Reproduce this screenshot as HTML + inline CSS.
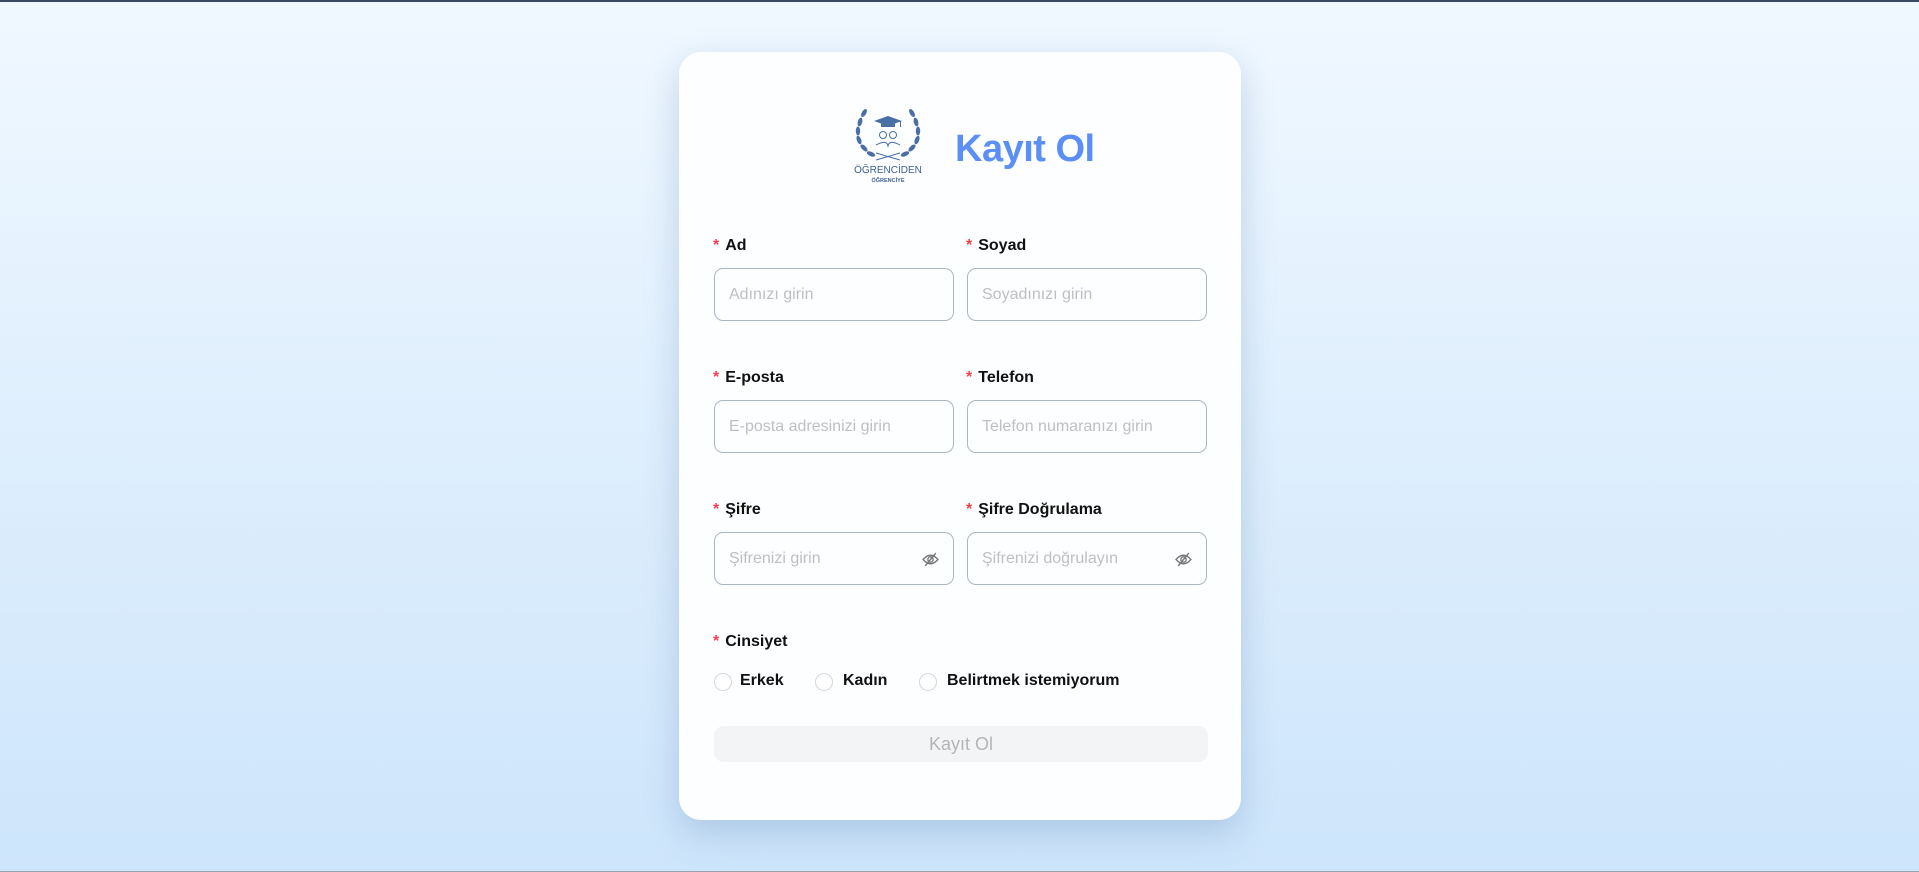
<!DOCTYPE html>
<html><head><meta charset="utf-8"><style>
*{box-sizing:border-box;margin:0;padding:0}
html,body{width:1919px;height:872px;overflow:hidden}
body{background:linear-gradient(180deg,#f0f8ff 0%,#cde5fb 100%);font-family:"Liberation Sans",sans-serif;position:relative;border-top:2px solid #3b4660}
.bot{position:absolute;left:0;right:0;bottom:0;height:1px;background:#9aa3ad}
.card{position:absolute;left:679px;top:50px;width:562px;height:768px;background:#fdfeff;border-radius:22px;box-shadow:0 12px 34px rgba(80,120,170,.28)}
.lbl{position:absolute;font-size:16px;line-height:18px;font-weight:bold;color:#111;white-space:nowrap}
.lbl i{color:#f5424d;font-style:normal;font-weight:bold;margin-right:6px}
.inp{position:absolute;width:240px;height:53px;border:1px solid #aab7c3;border-radius:9px;font-size:16px;color:#bfbfbf;padding-left:14px;line-height:51px}
.eye{position:absolute;right:14px;top:18px}
.r{position:absolute;width:18px;height:18px;border:1px solid #d5d8dc;border-radius:50%;background:#fff}
.rt{position:absolute;font-size:16px;line-height:18px;font-weight:bold;color:#111;white-space:nowrap}
.btn{position:absolute;left:35px;top:674px;width:494px;height:36px;background:#f3f4f6;border-radius:10px;color:#b5b5b5;font-size:18px;text-align:center;line-height:36px}
</style></head><body>
<div class="card">
<svg style="position:absolute;left:172px;top:55px" width="74" height="76" viewBox="0 0 68 76">
<g fill="#4a6fa5">
<ellipse cx="10" cy="6" rx="2.2" ry="4.5" transform="rotate(30 10 6)"/><ellipse cx="6" cy="15" rx="2.2" ry="4.5" transform="rotate(15 6 15)"/><ellipse cx="4" cy="24" rx="2.2" ry="4.5"/><ellipse cx="5" cy="33" rx="2.2" ry="4.5" transform="rotate(-20 5 33)"/><ellipse cx="10" cy="41" rx="2.2" ry="4.5" transform="rotate(-45 10 41)"/><ellipse cx="17" cy="47" rx="2.2" ry="4.5" transform="rotate(-65 17 47)"/>
<ellipse cx="58" cy="6" rx="2.2" ry="4.5" transform="rotate(-30 58 6)"/><ellipse cx="62" cy="15" rx="2.2" ry="4.5" transform="rotate(-15 62 15)"/><ellipse cx="64" cy="24" rx="2.2" ry="4.5"/><ellipse cx="63" cy="33" rx="2.2" ry="4.5" transform="rotate(20 63 33)"/><ellipse cx="58" cy="41" rx="2.2" ry="4.5" transform="rotate(45 58 41)"/><ellipse cx="51" cy="47" rx="2.2" ry="4.5" transform="rotate(65 51 47)"/>
<path d="M20 14 L34 9 L48 14 L34 19Z"/><rect x="27" y="16" width="14" height="4"/><rect x="46" y="14" width="1" height="6"/>
</g>
<g fill="none" stroke="#4a6fa5" stroke-width="1"><circle cx="29" cy="28" r="3.5"/><circle cx="39" cy="28" r="3.5"/><path d="M22 38 q12 -6 12 2 q0 -8 12 -2"/><path d="M22 53 L46 46 M46 53 L22 46"/></g>
<text x="34" y="66" font-family="Liberation Sans" font-size="10" fill="#3f5f92" text-anchor="middle">ÖĞRENCİDEN</text>
<text x="34" y="75" font-family="Liberation Sans" font-size="5.5" font-weight="bold" fill="#3f5f92" text-anchor="middle">ÖĞRENCİYE</text>
</svg>
<div style="position:absolute;left:276px;top:77px;font-size:38px;line-height:40px;font-weight:bold;color:#5b8ef7;letter-spacing:-0.5px">Kayıt Ol</div>

<div class="lbl" style="left:34px;top:185px"><i>*</i>Ad</div>
<div class="lbl" style="left:287px;top:185px"><i>*</i>Soyad</div>
<div class="inp" style="left:35px;top:216px">Adınızı girin</div>
<div class="inp" style="left:288px;top:216px">Soyadınızı girin</div>

<div class="lbl" style="left:34px;top:317px"><i>*</i>E-posta</div>
<div class="lbl" style="left:287px;top:317px"><i>*</i>Telefon</div>
<div class="inp" style="left:35px;top:348px">E-posta adresinizi girin</div>
<div class="inp" style="left:288px;top:348px">Telefon numaranızı girin</div>

<div class="lbl" style="left:34px;top:449px"><i>*</i>Şifre</div>
<div class="lbl" style="left:287px;top:449px"><i>*</i>Şifre Doğrulama</div>
<div class="inp" style="left:35px;top:480px">Şifrenizi girin<svg class="eye" width="17" height="17" viewBox="0 0 16 16" fill="none" stroke="#777" stroke-width="1.3"><path d="M1 8 q7 -8 14 0 q-7 8 -14 0z"/><circle cx="8" cy="8" r="2.5"/><path d="M3 14 L13 2"/></svg></div>
<div class="inp" style="left:288px;top:480px">Şifrenizi doğrulayın<svg class="eye" width="17" height="17" viewBox="0 0 16 16" fill="none" stroke="#777" stroke-width="1.3"><path d="M1 8 q7 -8 14 0 q-7 8 -14 0z"/><circle cx="8" cy="8" r="2.5"/><path d="M3 14 L13 2"/></svg></div>

<div class="lbl" style="left:34px;top:581px"><i>*</i>Cinsiyet</div>
<div class="r" style="left:35px;top:621px"></div><div class="rt" style="left:61px;top:620px">Erkek</div>
<div class="r" style="left:136px;top:621px"></div><div class="rt" style="left:164px;top:620px">Kadın</div>
<div class="r" style="left:240px;top:621px"></div><div class="rt" style="left:268px;top:620px">Belirtmek istemiyorum</div>

<div class="btn">Kayıt Ol</div>
</div>
<div class="bot"></div>
</body></html>
